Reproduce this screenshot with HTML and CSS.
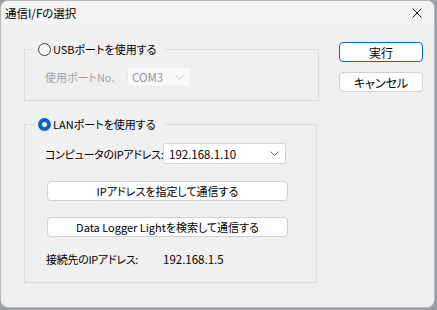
FILE: index.html
```html
<!DOCTYPE html>
<html lang="ja">
<head>
  <meta charset="UTF-8">
  <title>通信I/Fの選択</title>
  <link rel="stylesheet" href="styles.css">
</head>
<body>

  <div class="window">
    <!-- タイトルバー -->
    <div class="titlebar">
      <span class="title">通信I/Fの選択</span>
      <span class="close">
        <svg width="10" height="10" viewBox="0 0 10 10"><path d="M0.5 0.5 L9.5 9.5 M9.5 0.5 L0.5 9.5" stroke="#1a1a1a" stroke-width="1" fill="none"/></svg>
      </span>
    </div>

    <div class="content">
      <div class="groups">
        <!-- USB -->
        <fieldset class="group usb">
          <legend><span class="radio"></span>USBポートを使用する</legend>
          <div class="row">
            <span class="label label-usb disabled">使用ポートNo.</span>
            <div class="combo combo-usb disabled">
              <span>COM3</span>
              <svg width="9" height="5" viewBox="0 0 9 5"><path d="M0.5 0.5 L4.5 4.5 L8.5 0.5" stroke="#c4c4c4" fill="none"/></svg>
            </div>
          </div>
        </fieldset>

        <!-- LAN -->
        <fieldset class="group lan">
          <legend><span class="radio checked"></span>LANポートを使用する</legend>
          <div class="row">
            <span class="label">コンピュータのIPアドレス:</span>
            <div class="combo combo-lan">
              <span>192.168.1.10</span>
              <svg width="9" height="5" viewBox="0 0 9 5"><path d="M0.5 0.5 L4.5 4.5 L8.5 0.5" stroke="#606060" fill="none"/></svg>
            </div>
          </div>
          <button class="btn wide first">IPアドレスを指定して通信する</button>
          <button class="btn wide second">Data Logger Lightを検索して通信する</button>
          <div class="row result">
            <span class="label">接続先のIPアドレス:</span>
            <span class="value">192.168.1.5</span>
          </div>
        </fieldset>
      </div>

      <div class="actions">
        <button class="btn default">実行</button>
        <button class="btn">キャンセル</button>
      </div>
    </div>
  </div>

</body>
</html>
```

FILE: styles.css
```css
* {
  box-sizing: border-box;
}

html {
  background: #9c9fa6;
}

body {
  margin: 0;
  font-family: "Noto Sans CJK JP", "Noto Sans", sans-serif;
  font-size: 11px;
  font-feature-settings: "palt";
  color: #000;
}

.window {
  width: 435px;
  height: 308px;
  background: #f0f0f0;
  border: 1px solid #b8b8b8;
  border-radius: 8px;
  overflow: hidden;
}

.titlebar {
  height: 23px;
  background: #f3f3f3;
  display: flex;
  align-items: center;
  justify-content: space-between;
  padding: 0 10px 0 4px;
}

.title {
  font-size: 11.5px;
  line-height: 16px;
}

.close {
  display: flex;
  padding-right: 2px;
}

.content {
  display: flex;
  align-items: flex-start;
  padding: 16px 0 0 23px;
}

.group {
  margin: 0;
  border: 1px solid #dcdcdc;
  min-width: 0;
}

.group legend {
  margin-left: -11px;
  padding: 0 9px 0 4px;
  height: 18px;
  line-height: 18px;
  display: flex;
  align-items: center;
}

.usb {
  width: 295px;
  padding: 9px 0 13px 20px;
}

.lan {
  width: 293px;
  margin-top: 14px;
  padding: 10px 0 14px 20px;
}

.radio {
  width: 13px;
  height: 13px;
  border: 1px solid #3a3a3a;
  border-radius: 50%;
  background: #f7f7f7;
  margin-right: 2px;
  display: inline-block;
}

.radio.checked {
  border: 4px solid #0067c0;
  background: #fff;
}

.row {
  display: flex;
  align-items: center;
}

.label {
  white-space: nowrap;
  flex-shrink: 0;
}

.label-usb {
  width: 82px;
}

.lan .label {
  width: 118px;
  letter-spacing: -0.3px;
}

.disabled {
  color: #a0a0a0;
}

.combo {
  display: flex;
  align-items: center;
  justify-content: space-between;
  border-radius: 3px;
  font-size: 11.5px;
}

.combo-usb {
  width: 64px;
  height: 20px;
  padding: 0 6px 0 4px;
  background: #f9f9f9;
  border: 1px solid #ebebeb;
  color: #8c96a6;
}

.combo-lan {
  width: 123px;
  height: 21px;
  padding: 0 6px 0 5px;
  background: #fff;
  border: 1px solid #d3d3d3;
}

.value {
  font-size: 11.5px;
}

.btn {
  font-family: inherit;
  font-size: 11px;
  font-feature-settings: "palt";
  color: #000;
  background: #fdfdfd;
  border: 1px solid #d0d0d0;
  border-radius: 4px;
  height: 20px;
  padding: 0;
  display: block;
}

.wide {
  width: 241px;
  margin-left: 2px;
}

.first {
  margin-top: 17px;
}

.second {
  margin-top: 16px;
}

.result {
  margin-top: 13px;
  height: 18px;
}

.result .label {
  padding-left: 1px;
}

.actions {
  margin: 2px 0 0 20px;
  display: flex;
  flex-direction: column;
  gap: 10px;
}

.actions .btn {
  width: 84px;
  font-size: 12px;
}

.btn.default {
  border: 1px solid #0067c0;
}
```
